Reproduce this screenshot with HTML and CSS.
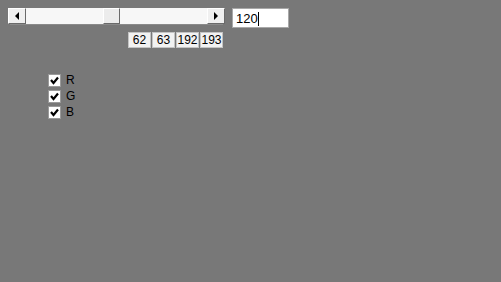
FILE: index.html
```html
<!DOCTYPE html>
<html lang="en">
<head>
<meta charset="utf-8">
<title>RGB</title>
<link rel="stylesheet" href="styles.css">
</head>
<body>
  <div class="top">
    <div class="scroll">
      <div class="btn"><span class="arrow left"></span></div>
      <div class="track">
        <div class="thumb" style="left: 77px"></div>
      </div>
      <div class="btn"><span class="arrow right"></span></div>
    </div>
    <div class="entry">120<span class="caret"></span></div>
  </div>

  <div class="cells">
    <div class="cell">62</div>
    <div class="cell">63</div>
    <div class="cell">192</div>
    <div class="cell">193</div>
  </div>

  <div class="checks">
    <label class="chk"><span class="box"><svg viewBox="0 0 11 11" width="11" height="11"><polyline points="2,5 4.5,8 9,2.5" fill="none" stroke="#000" stroke-width="2.2"/></svg></span>R</label>
    <label class="chk"><span class="box"><svg viewBox="0 0 11 11" width="11" height="11"><polyline points="2,5 4.5,8 9,2.5" fill="none" stroke="#000" stroke-width="2.2"/></svg></span>G</label>
    <label class="chk"><span class="box"><svg viewBox="0 0 11 11" width="11" height="11"><polyline points="2,5 4.5,8 9,2.5" fill="none" stroke="#000" stroke-width="2.2"/></svg></span>B</label>
  </div>
</body>
</html>
```

FILE: styles.css
```css
html, body {
  background: #787878;
}

body {
  margin: 8px;
  font-family: "Liberation Sans", Arial, sans-serif;
  font-size: 12px;
  color: #000;
}

.top {
  display: flex;
  align-items: flex-start;
  gap: 7px;
}

.scroll {
  display: flex;
  width: 217px;
  height: 16px;
  background: #f4f4f4;
  box-shadow: 0 3px 0 -2px #8a8a8a;
}

.btn {
  width: 18px;
  height: 16px;
  box-sizing: border-box;
  background: #f0f0f0;
  border-top: 1px solid #fff;
  border-left: 1px solid #fff;
  border-right: 1px solid #6a6a6a;
  border-bottom: 1px solid #6a6a6a;
  display: flex;
  align-items: center;
  justify-content: center;
}

.arrow {
  width: 0;
  height: 0;
  border-top: 4px solid transparent;
  border-bottom: 4px solid transparent;
}

.arrow.left {
  border-right: 4px solid #000;
}

.arrow.right {
  border-left: 4px solid #000;
}

.track {
  flex: 1;
  position: relative;
  background: #f7f7f7;
}

.thumb {
  position: absolute;
  top: 0;
  width: 17px;
  height: 16px;
  box-sizing: border-box;
  background: #ececec;
  border-top: 1px solid #fff;
  border-left: 1px solid #fff;
  border-right: 1px solid #6a6a6a;
  border-bottom: 1px solid #6a6a6a;
}

.entry {
  width: 57px;
  height: 20px;
  box-sizing: border-box;
  background: #fff;
  border: 1px solid #a8a8a8;
  padding: 3px 0 0 3px;
  font-size: 13px;
  line-height: 14px;
  display: flex;
  align-items: flex-start;
}

.caret {
  width: 1px;
  height: 14px;
  background: #000;
}

.cells {
  display: flex;
  gap: 1px;
  margin: 4px 0 0 120px;
}

.cell {
  width: 23px;
  height: 16px;
  box-sizing: border-box;
  background: #f2f2f2;
  border: 1px solid #c4c4c4;
  text-align: center;
  line-height: 14px;
}

.checks {
  display: flex;
  flex-direction: column;
  gap: 3px;
  margin: 26px 0 0 40px;
}

.chk {
  display: flex;
  align-items: center;
  gap: 5px;
  height: 13px;
  line-height: 13px;
}

.box {
  width: 13px;
  height: 13px;
  box-sizing: border-box;
  background: #fff;
  border: 1px solid #9a9a9a;
  display: flex;
}
```
